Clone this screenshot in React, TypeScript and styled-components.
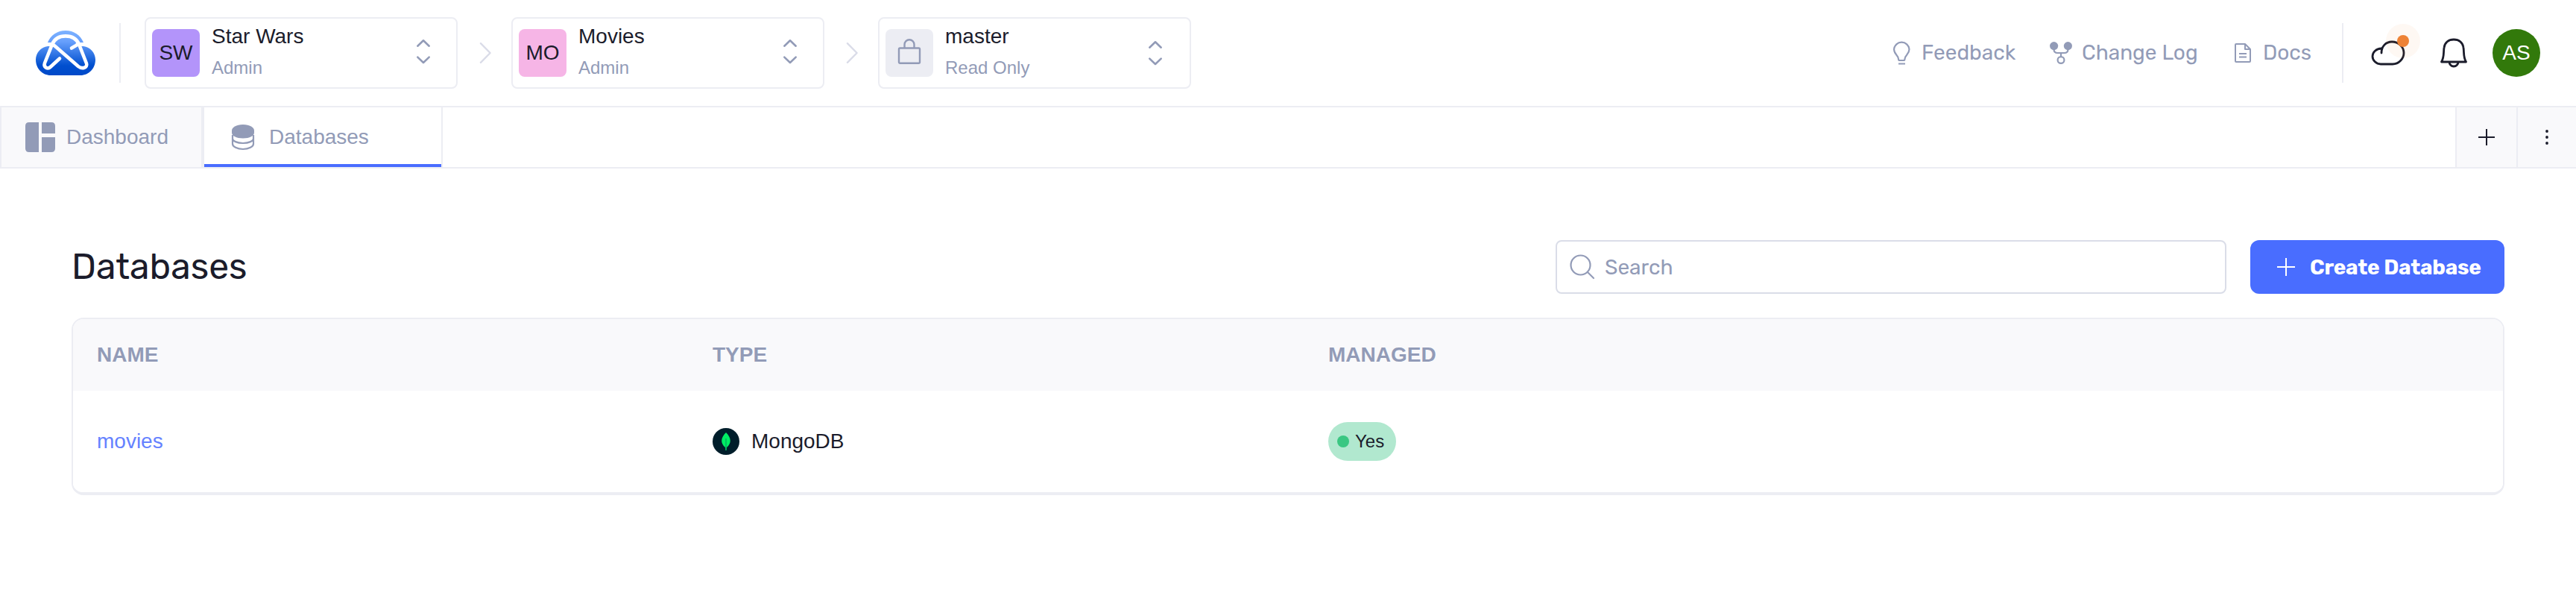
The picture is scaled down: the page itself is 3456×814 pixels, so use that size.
import React from "react";
import styled, { createGlobalStyle } from "styled-components";

const ink = "#1b1c2b";
const muted = "#929bb7";
const line = "#ecedf3";
const soft = "#f9f9fb";
const blue = "#496dff";
const sans = `"Liberation Sans", Arial, sans-serif`;
const rounded = `Rubik, Roboto, "Liberation Sans", sans-serif`;

const GlobalStyle = createGlobalStyle`
  * { box-sizing: border-box; }
  body { margin: 0; background: #fff; color: ${ink}; font-family: ${sans}; font-size: 28px; }
  svg { display: block; flex: none; overflow: visible; }
  button { font: inherit; border: 0; background: none; padding: 0; margin: 0; color: inherit; }
`;

const Page = styled.div`
  width: 100%;
  height: 814px;
  overflow: hidden;
  background: #fff;
`;

const Header = styled.header`
  height: 144px;
  border-bottom: 2px solid ${line};
  display: flex;
  align-items: center;
  padding: 0 48px;
`;

const Divider = styled.div<{ $before: number; $after: number }>`
  width: 2px;
  height: 80px;
  background: ${line};
  margin-left: ${(p) => p.$before}px;
  margin-right: ${(p) => p.$after}px;
`;

const Selector = styled.button<{ $end?: number }>`
  width: 420px;
  height: 96px;
  border: 2px solid ${line};
  border-radius: 8px;
  display: flex;
  align-items: center;
  padding: 0 ${(p) => p.$end ?? 34}px 0 8px;
  text-align: left;
`;

const Tile = styled.div<{ $color: string }>`
  width: 64px;
  height: 64px;
  border-radius: 8px;
  background: ${(p) => p.$color};
  display: flex;
  align-items: center;
  justify-content: center;
  margin-right: 16px;
  font-size: 28px;
  line-height: 32px;
`;

const Labels = styled.div`
  flex: 1;
  display: flex;
  flex-direction: column;
  gap: 11px;
  padding-bottom: 3px;
`;

const Title = styled.span`
  font-size: 28px;
  line-height: 32px;
`;

const Role = styled.span`
  font-size: 24px;
  line-height: 30px;
  color: ${muted};
`;

const Crumb = styled.div`
  width: 72px;
  display: flex;
  justify-content: center;
`;

const Spacer = styled.div`
  flex: 1;
`;

const HeaderLinks = styled.nav`
  display: flex;
  align-items: center;
  gap: 44px;
`;

const HeaderLink = styled.a<{ $gap: number; $width: number }>`
  display: flex;
  align-items: center;
  gap: ${(p) => p.$gap}px;
  width: ${(p) => p.$width}px;
  color: ${muted};
  font-family: ${rounded};
  font-size: 28px;
  line-height: 34px;
  white-space: nowrap;
`;

const CloudStatus = styled.div`
  position: relative;
  display: flex;
  margin-right: 47px;
`;

const StatusDot = styled.span`
  position: absolute;
  left: 20px;
  top: -22px;
  width: 46px;
  height: 46px;
  border-radius: 50%;
  background: rgba(238, 130, 53, 0.06);
  display: flex;
  align-items: center;
  justify-content: center;
  &::after {
    content: "";
    width: 16px;
    height: 16px;
    border-radius: 50%;
    background: #ee8235;
  }
`;

const UserAvatar = styled.div`
  width: 64px;
  height: 64px;
  border-radius: 50%;
  background: #32790b;
  color: #fff;
  font-size: 28px;
  line-height: 32px;
  display: flex;
  align-items: center;
  justify-content: center;
  margin-left: 34px;
`;

const TabBar = styled.div`
  height: 82px;
  border-bottom: 2px solid ${line};
  display: flex;
`;

const Tab = styled.div<{ $active?: boolean; $width: number; $pad: number; $gap: number }>`
  width: ${(p) => p.$width}px;
  height: 80px;
  padding-left: ${(p) => p.$pad}px;
  display: flex;
  align-items: center;
  gap: ${(p) => p.$gap}px;
  color: ${muted};
  background: ${(p) => (p.$active ? "#fff" : soft)};
  border-left: 2px solid ${line};
  border-right: 2px solid ${line};
  box-shadow: ${(p) => (p.$active ? `inset 0 -4px 0 ${blue}` : "none")};
`;

const TabAction = styled.button<{ $width: number }>`
  width: ${(p) => p.$width}px;
  height: 80px;
  background: ${soft};
  border-left: 2px solid ${line};
  display: flex;
  align-items: center;
  justify-content: center;
`;

const Main = styled.main`
  padding: 96px 96px 0;
`;

const Toolbar = styled.div`
  display: flex;
  align-items: center;
  height: 72px;
  margin-bottom: 32px;
`;

const Heading = styled.h1`
  flex: 1;
  margin: 0;
  font-family: ${rounded};
  font-weight: 400;
  font-size: 48px;
  line-height: 56px;
`;

const SearchBox = styled.div`
  width: 900px;
  height: 72px;
  border: 2px solid #dadde8;
  border-radius: 8px;
  display: flex;
  align-items: center;
  gap: 13px;
  padding-left: 17px;
  color: ${muted};
  font-family: ${rounded};
  font-size: 28px;
  margin-right: 32px;
`;

const CreateButton = styled.button`
  width: 341px;
  height: 72px;
  border-radius: 12px;
  background: ${blue};
  color: #fff;
  display: flex;
  align-items: center;
  gap: 20px;
  padding-left: 36px;
  font-family: ${rounded};
  font-weight: 700;
  font-size: 28px;
  letter-spacing: -0.25px;
  white-space: nowrap;
`;

const Table = styled.section`
  height: 238px;
  border: 2px solid ${line};
  border-bottom-width: 4px;
  border-radius: 16px;
  overflow: hidden;
`;

const Row = styled.div<{ $head?: boolean }>`
  display: grid;
  grid-template-columns: 826px 826px 1fr;
  align-items: center;
  padding-left: 32px;
  height: ${(p) => (p.$head ? 96 : 136)}px;
  background: ${(p) => (p.$head ? soft : "#fff")};
  color: ${(p) => (p.$head ? muted : ink)};
  font-weight: ${(p) => (p.$head ? 700 : 400)};
`;

const NameLink = styled.a`
  color: #6582ff;
`;

const TypeCell = styled.div`
  display: flex;
  align-items: center;
  gap: 16px;
`;

const Badge = styled.span`
  width: 91px;
  height: 52px;
  border-radius: 26px;
  background: #b1e8cf;
  display: flex;
  align-items: center;
  gap: 8px;
  padding-left: 12px;
  font-size: 24px;
  &::before {
    content: "";
    width: 16px;
    height: 16px;
    border-radius: 50%;
    background: #3ac782;
  }
`;

const Logo = () => (
  <svg width="80" height="60" viewBox="0 0 80 60">
    <defs>
      <linearGradient id="cloud" x1="0" y1="0" x2="0" y2="1">
        <stop offset="0" stopColor="#7db2ff" />
        <stop offset=".25" stopColor="#669ffc" />
        <stop offset=".78" stopColor="#004fcf" />
        <stop offset="1" stopColor="#0049c8" />
      </linearGradient>
    </defs>
    <path d="M16 16C20 6 29 0 40 0s20 6 24 16v5c9 1 16 9 16 18 0 12-9 21-20 21H20C9 60 0 51 0 39c0-9 7-17 16-18z" fill="url(#cloud)" />
    <path d="M15 18.500H22C25 11 32 7.300 40 7.300s15 3.700 18 11.200h7" fill="none" stroke="#fff" strokeWidth="4.800" />
    <path d="M32 37.500 20 48.500c-4 4-10 1-8-5l9-22.500c1-2 3-2 5 0l31 27c5 4 13 2 11-4l-9-23c-1-3-3-3-5-1l-6 3.500" fill="none" stroke="#fff" strokeWidth="4.600" strokeLinecap="round" strokeLinejoin="round" />
  </svg>
);

const UpDown = ({ shift = 0 }: { shift?: number }) => (
  <svg width="20" height="36" viewBox={`0 ${-shift} 20 36`} fill="none" stroke={muted} strokeWidth="2.600" strokeLinecap="round" strokeLinejoin="round">
    <path d="M2.300 8.700 10 1.300l7.700 7.400M2.300 23.600 10 31l7.700-7.400" />
  </svg>
);

const CrumbArrow = () => (
  <svg width="18" height="30" viewBox="0 0 18 30" fill="none" stroke="#dadce8" strokeWidth="2.400" strokeLinecap="round" strokeLinejoin="round">
    <path d="M3.900 2.200 16.600 15 3.900 27.800" />
  </svg>
);

const Lock = () => (
  <svg width="32" height="38" viewBox="0 0 32 38" fill="none" stroke={muted} strokeWidth="2.400" strokeLinejoin="round">
    <rect x="2" y="12.500" width="28" height="20.300" rx="1.500" />
    <path d="M9.500 12.500V7.700a6.500 6.500 0 0 1 13 0v4.800" />
  </svg>
);

const Bulb = () => (
  <svg width="24" height="34" viewBox="0 0 24 34" fill="none" stroke={muted} strokeWidth="2.200">
    <path d="M8 25c0-5-6-6-6-13a10.300 10.300 0 0 1 20.500 0c0 7-6 8-6 13q0 2-1.500 2H9.500Q8 27 8 25zM8 31.500h9" />
  </svg>
);

const Fork = () => (
  <svg width="30" height="30" viewBox="0 0 30 30" fill="none" stroke={muted} strokeWidth="2.200">
    <circle cx="5.600" cy="5.600" r="5.600" fill={muted} stroke="none" />
    <circle cx="24.400" cy="5.600" r="5.600" fill={muted} stroke="none" />
    <path d="M5.500 10q0 5 5 5h9q5 0 5-5M15 15v5" />
    <circle cx="15" cy="24.500" r="4.400" />
  </svg>
);

const Doc = () => (
  <svg width="22" height="26" viewBox="0 0 22 26" fill="none" stroke={muted} strokeWidth="2" strokeLinejoin="round">
    <path d="M1 2Q1 1 2 1h12l7 7v16q0 1-1 1H2q-1 0-1-1zM14 1v7h7M6 14h10M6 18.500h10" />
  </svg>
);

const Cloud = () => (
  <svg width="46" height="34" viewBox="0 0 46 34" fill="none" stroke={ink} strokeWidth="2.800" strokeLinecap="round">
    <path d="M14 17C14 8 20 2 28 2c9 0 16 7 16 15s-7 15-15 15H13C7 32 2 27 2 21.500S7 11 14 11" />
  </svg>
);

const Bell = () => (
  <svg width="36" height="40" viewBox="0 0 36 40" fill="none" stroke={ink} strokeWidth="2.800" strokeLinejoin="round">
    <path d="M1.500 32c4-7 2.500-13 3.500-19C6 6 11 2 18 2s12 4 13 11c1 6-.5 12 3.500 19zM12 32a6 6 0 0 0 12 0" />
  </svg>
);

const DashboardIcon = () => (
  <svg width="40" height="40" viewBox="0 0 40 40" fill={muted}>
    <path d="M5 0h13v40H5q-5 0-5-5V5q0-5 5-5zM22 0h13q5 0 5 5v10H22zM22 20h18v15q0 5-5 5H22z" />
  </svg>
);

const DatabaseIcon = () => (
  <svg width="30" height="34" viewBox="0 0 30 34" fill="none" stroke={muted} strokeWidth="2.200">
    <path d="M0 8c0-4 6-8 15-8s15 4 15 8v3c0 4-6 7.500-15 7.500S0 15 0 11z" fill={muted} stroke="none" />
    <path d="M1 14v5c0 3 6 6 14 6s14-3 14-6v-5M1 19v7c0 3.500 6 7 14 7s14-3.500 14-7v-7" />
  </svg>
);

const Plus = ({ color, size }: { color: string; size: number }) => (
  <svg width={size} height={size} viewBox={`0 0 ${size} ${size}`} stroke={color} strokeWidth="2">
    <path d={`M${size / 2} 0v${size}M0 ${size / 2}h${size}`} />
  </svg>
);

const Dots = () => (
  <svg width="4" height="20" viewBox="0 0 4 20" fill={ink}>
    <circle cx="2" cy="2" r="1.900" />
    <circle cx="2" cy="10" r="1.900" />
    <circle cx="2" cy="18" r="1.900" />
  </svg>
);

const SearchIcon = () => (
  <svg width="34" height="34" viewBox="0 0 34 34" fill="none" stroke={muted} strokeWidth="2.200" strokeLinecap="round">
    <circle cx="14.500" cy="14.500" r="13" />
    <path d="M24 24l8 8" />
  </svg>
);

const Mongo = () => (
  <svg width="36" height="36" viewBox="0 0 36 36">
    <circle cx="18" cy="18" r="18" fill="#001e2b" />
    <path d="M18 6c7 7 8 14 1 20l-.5 4h-1L17 26C10 20 11 13 18 6z" fill="#00ed64" />
    <path d="M18 14v16" stroke="#00a35c" strokeWidth="1.200" />
  </svg>
);

export default function App() {
  return (
    <Page>
      <GlobalStyle />
      <Header>
        <Logo />
        <Divider $before={32} $after={32} />
        <Selector>
          <Tile $color="#b394fa">SW</Tile>
          <Labels><Title>Star Wars</Title><Role>Admin</Role></Labels>
          <UpDown />
        </Selector>
        <Crumb><CrumbArrow /></Crumb>
        <Selector>
          <Tile $color="#f6b5e6">MO</Tile>
          <Labels><Title>Movies</Title><Role>Admin</Role></Labels>
          <UpDown />
        </Selector>
        <Crumb><CrumbArrow /></Crumb>
        <Selector $end={36}>
          <Tile $color={line}><Lock /></Tile>
          <Labels><Title>master</Title><Role>Read Only</Role></Labels>
          <UpDown shift={2} />
        </Selector>
        <Spacer />
        <HeaderLinks>
          <HeaderLink $gap={15} $width={167}><Bulb />Feedback</HeaderLink>
          <HeaderLink $gap={13} $width={204}><Fork />Change Log</HeaderLink>
          <HeaderLink $gap={16} $width={106}><Doc />Docs</HeaderLink>
        </HeaderLinks>
        <Divider $before={38} $after={37} />
        <CloudStatus><Cloud /><StatusDot /></CloudStatus>
        <Bell />
        <UserAvatar>AS</UserAvatar>
      </Header>
      <TabBar>
        <Tab $width={272} $pad={32} $gap={15}><DashboardIcon />Dashboard</Tab>
        <Tab $active $width={322} $pad={37} $gap={20}><DatabaseIcon />Databases</Tab>
        <Spacer />
        <TabAction $width={82}><Plus color={ink} size={22} /></TabAction>
        <TabAction $width={80}><Dots /></TabAction>
      </TabBar>
      <Main>
        <Toolbar>
          <Heading>Databases</Heading>
          <SearchBox><SearchIcon />Search</SearchBox>
          <CreateButton><Plus color="#fff" size={24} />Create Database</CreateButton>
        </Toolbar>
        <Table>
          <Row $head><span>NAME</span><span>TYPE</span><span>MANAGED</span></Row>
          <Row>
            <NameLink>movies</NameLink>
            <TypeCell><Mongo />MongoDB</TypeCell>
            <Badge>Yes</Badge>
          </Row>
        </Table>
      </Main>
    </Page>
  );
}
